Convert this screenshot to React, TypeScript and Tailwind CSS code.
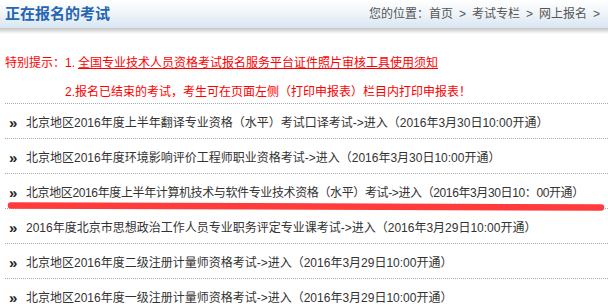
import React from 'react';

const rows = [
  '北京地区2016年度上半年翻译专业资格（水平）考试口译考试->进入（2016年3月30日10:00开通）',
  '北京地区2016年度环境影响评价工程师职业资格考试->进入（2016年3月30日10:00开通）',
  '北京地区2016年度上半年计算机技术与软件专业技术资格（水平）考试->进入（2016年3月30日10：00开通）',
  '2016年度北京市思想政治工作人员专业职务评定专业课考试->进入（2016年3月29日10:00开通）',
  '北京地区2016年度二级注册计量师资格考试->进入（2016年3月29日10:00开通）',
  '北京地区2016年度一级注册计量师资格考试->进入（2016年3月29日10:00开通）',
];

function Header() {
  return (
    <div>
      <div className="flex h-[28px] items-center justify-between bg-gradient-to-b from-[#ffffff] via-[#eef4f9] to-[#d8e6f2] pl-[5px] pr-[8px]">
        <h1 className="text-[15px] font-bold leading-[16px] text-[#2565b2]">正在报名的考试</h1>
        <div className="flex items-center text-[12px] leading-[16px] text-[#555555]">
          <span>您的位置：首页</span>
          <span className="px-[6px]">&gt;</span>
          <span>考试专栏</span>
          <span className="px-[6px]">&gt;</span>
          <span>网上报名</span>
          <span className="pl-[6px]">&gt;</span>
        </div>
      </div>
      <div className="h-[6px] bg-gradient-to-b from-[#c4c4c4] to-[#ffffff]" />
    </div>
  );
}

function Notice() {
  return (
    <div className="border-b border-dotted border-[#aaaaaa] pb-[3px] pt-[21px] text-[12px] leading-[16px] text-[#ff0000]">
      <div className="flex">
        <span className="w-[60px] shrink-0">特别提示：</span>
        <span>1.</span>
        <a href="#" className="ml-[3px] underline underline-offset-1">
          全国专业技术人员资格考试报名服务平台证件照片审核工具使用须知
        </a>
      </div>
      <div className="mt-[13px] pl-[60px]">2.报名已结束的考试，考生可在页面左侧（打印申报表）栏目内打印申报表！</div>
    </div>
  );
}

export default function App() {
  return (
    <div className="relative h-[307px] w-[608px] overflow-hidden bg-white font-['Liberation_Sans','Noto_Sans_CJK_SC',sans-serif]">
      <Header />
      <div className="pl-[5px]">
        <Notice />
        <ul>
          {rows.map((r, i) => (
            <li
              key={i}
              className="flex h-[35px] items-start border-b border-dotted border-[#aaaaaa] pt-[11px]"
            >
              <span className="w-[21px] shrink-0 pl-[4px] text-[15px] font-bold leading-[16px] text-[#222222]">»</span>
              <span
                className={
                  i === 2
                    ? 'whitespace-nowrap text-[12px] leading-[16px] tracking-[-0.38px] text-[#333333]'
                    : 'whitespace-nowrap text-[12px] leading-[16px] text-[#333333]'
                }
              >
                {r}
              </span>
            </li>
          ))}
        </ul>
      </div>
      {/* red marker stroke over the third row */}
      <svg className="absolute left-0 top-[198px]" width="608" height="18" viewBox="0 0 608 18">
        <path
          d="M11 7.5 C 120 7.5, 300 9.5, 601 9.5"
          fill="none"
          stroke="#ff3b3b"
          strokeWidth="6.5"
          strokeLinecap="round"
        />
      </svg>
    </div>
  );
}
